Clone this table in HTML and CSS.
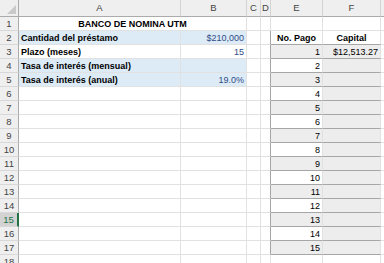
FILE: index.html
```html
<!DOCTYPE html>
<html>
<head lang="es">
    <meta charset="UTF-8">
    <title>Banco de Nomina UTM</title>
    <link rel="stylesheet" href="styles.css">
</head>
<body>
<div class="sheet">
    <!-- encabezados de columna -->
    <div class="h corner"></div><div class="h">A</div><div class="h">B</div><div class="h">C</div><div class="h">D</div><div class="h">E</div><div class="h">F</div><div class="h"></div>

    <div class="n">1</div><div class="c title">BANCO DE NOMINA UTM</div><div class="c"></div><div class="c"></div><div class="c"></div><div class="c"></div><div class="c"></div>
    <div class="n">2</div><div class="c fill lbl">Cantidad del préstamo</div><div class="c fill num val">$210,000</div><div class="c"></div><div class="c edge"></div><div class="c th">No. Pago</div><div class="c th">Capital</div><div class="c"></div>
    <div class="n">3</div><div class="c lbl">Plazo (meses)</div><div class="c num val">15</div><div class="c"></div><div class="c edge"></div><div class="c row num odd">1</div><div class="c row num f">$12,513.27</div><div class="c"></div>
    <div class="n">4</div><div class="c fill lbl">Tasa de interés (mensual)</div><div class="c fill"></div><div class="c"></div><div class="c edge"></div><div class="c row num">2</div><div class="c row f"></div><div class="c"></div>
    <div class="n">5</div><div class="c fill lbl">Tasa de interés (anual)</div><div class="c fill num val">19.0%</div><div class="c"></div><div class="c edge"></div><div class="c row num odd">3</div><div class="c row f"></div><div class="c"></div>
    <div class="n">6</div><div class="c"></div><div class="c"></div><div class="c"></div><div class="c edge"></div><div class="c row num">4</div><div class="c row f"></div><div class="c"></div>
    <div class="n">7</div><div class="c"></div><div class="c"></div><div class="c"></div><div class="c edge"></div><div class="c row num odd">5</div><div class="c row f"></div><div class="c"></div>
    <div class="n">8</div><div class="c"></div><div class="c"></div><div class="c"></div><div class="c edge"></div><div class="c row num">6</div><div class="c row f"></div><div class="c"></div>
    <div class="n">9</div><div class="c"></div><div class="c"></div><div class="c"></div><div class="c edge"></div><div class="c row num odd">7</div><div class="c row f"></div><div class="c"></div>
    <div class="n">10</div><div class="c"></div><div class="c"></div><div class="c"></div><div class="c edge"></div><div class="c row num">8</div><div class="c row f"></div><div class="c"></div>
    <div class="n">11</div><div class="c"></div><div class="c"></div><div class="c"></div><div class="c edge"></div><div class="c row num odd">9</div><div class="c row f"></div><div class="c"></div>
    <div class="n">12</div><div class="c"></div><div class="c"></div><div class="c"></div><div class="c edge"></div><div class="c row num">10</div><div class="c row f"></div><div class="c"></div>
    <div class="n">13</div><div class="c"></div><div class="c"></div><div class="c"></div><div class="c edge"></div><div class="c row num odd">11</div><div class="c row f"></div><div class="c"></div>
    <div class="n">14</div><div class="c"></div><div class="c"></div><div class="c"></div><div class="c edge"></div><div class="c row num">12</div><div class="c row f"></div><div class="c"></div>
    <div class="n sel">15</div><div class="c"></div><div class="c"></div><div class="c"></div><div class="c edge"></div><div class="c row num odd">13</div><div class="c row f"></div><div class="c"></div>
    <div class="n">16</div><div class="c"></div><div class="c"></div><div class="c"></div><div class="c edge"></div><div class="c row num">14</div><div class="c row f"></div><div class="c"></div>
    <div class="n">17</div><div class="c"></div><div class="c"></div><div class="c"></div><div class="c edge"></div><div class="c row num odd">15</div><div class="c row f"></div><div class="c"></div>
    <div class="n">18</div><div class="c"></div><div class="c"></div><div class="c"></div><div class="c"></div><div class="c"></div><div class="c"></div><div class="c"></div>
</div>
</body>
</html>
```

FILE: styles.css
```css
*{margin:0;padding:0;box-sizing:border-box;}
body{width:384px;height:263px;overflow:hidden;background:#fff;font-family:"Liberation Sans",Arial,sans-serif;}

/* hoja: cabecera de filas + columnas A..G */
.sheet{display:grid;grid-template-columns:19px 162px 66px 14px 10px 52px 58px 1fr;grid-template-rows:17px repeat(18,14px);}

.h{background:#efefef;border-right:1px solid #d4d4d4;border-bottom:1px solid #ababab;color:#444;font-size:9.5px;line-height:16px;text-align:center;}
.corner{display:flex;align-items:flex-end;justify-content:flex-end;padding:0 2px 2px 0;border-right-color:#ababab;}
.corner::after{content:"";width:0;height:0;border-left:9px solid transparent;border-bottom:9px solid #c9c9c9;}

.n{background:#efefef;border-right:1px solid #ababab;border-bottom:1px solid #d8d8d8;color:#444;font-size:9.5px;line-height:13px;text-align:center;}
.n.sel{background:#d3d3d3;color:#217346;border-right:2px solid #217346;}

.c{border-right:1px solid #e1e1e1;border-bottom:1px solid #e1e1e1;font-size:9px;line-height:14px;padding:0 2px;white-space:nowrap;color:#000;}
.title{grid-column:span 2;text-align:center;font-weight:bold;}
.fill{background:#ddebf7;}
.lbl{font-weight:bold;}
.num{text-align:right;}
.val{color:#2f4b85;}
.edge{border-right-color:#a6a6a6;}
.th{font-weight:bold;text-align:center;border-bottom-color:#a6a6a6;}
.row{border-bottom-color:#a6a6a6;}
.odd,.f{background:#ededed;}
```
